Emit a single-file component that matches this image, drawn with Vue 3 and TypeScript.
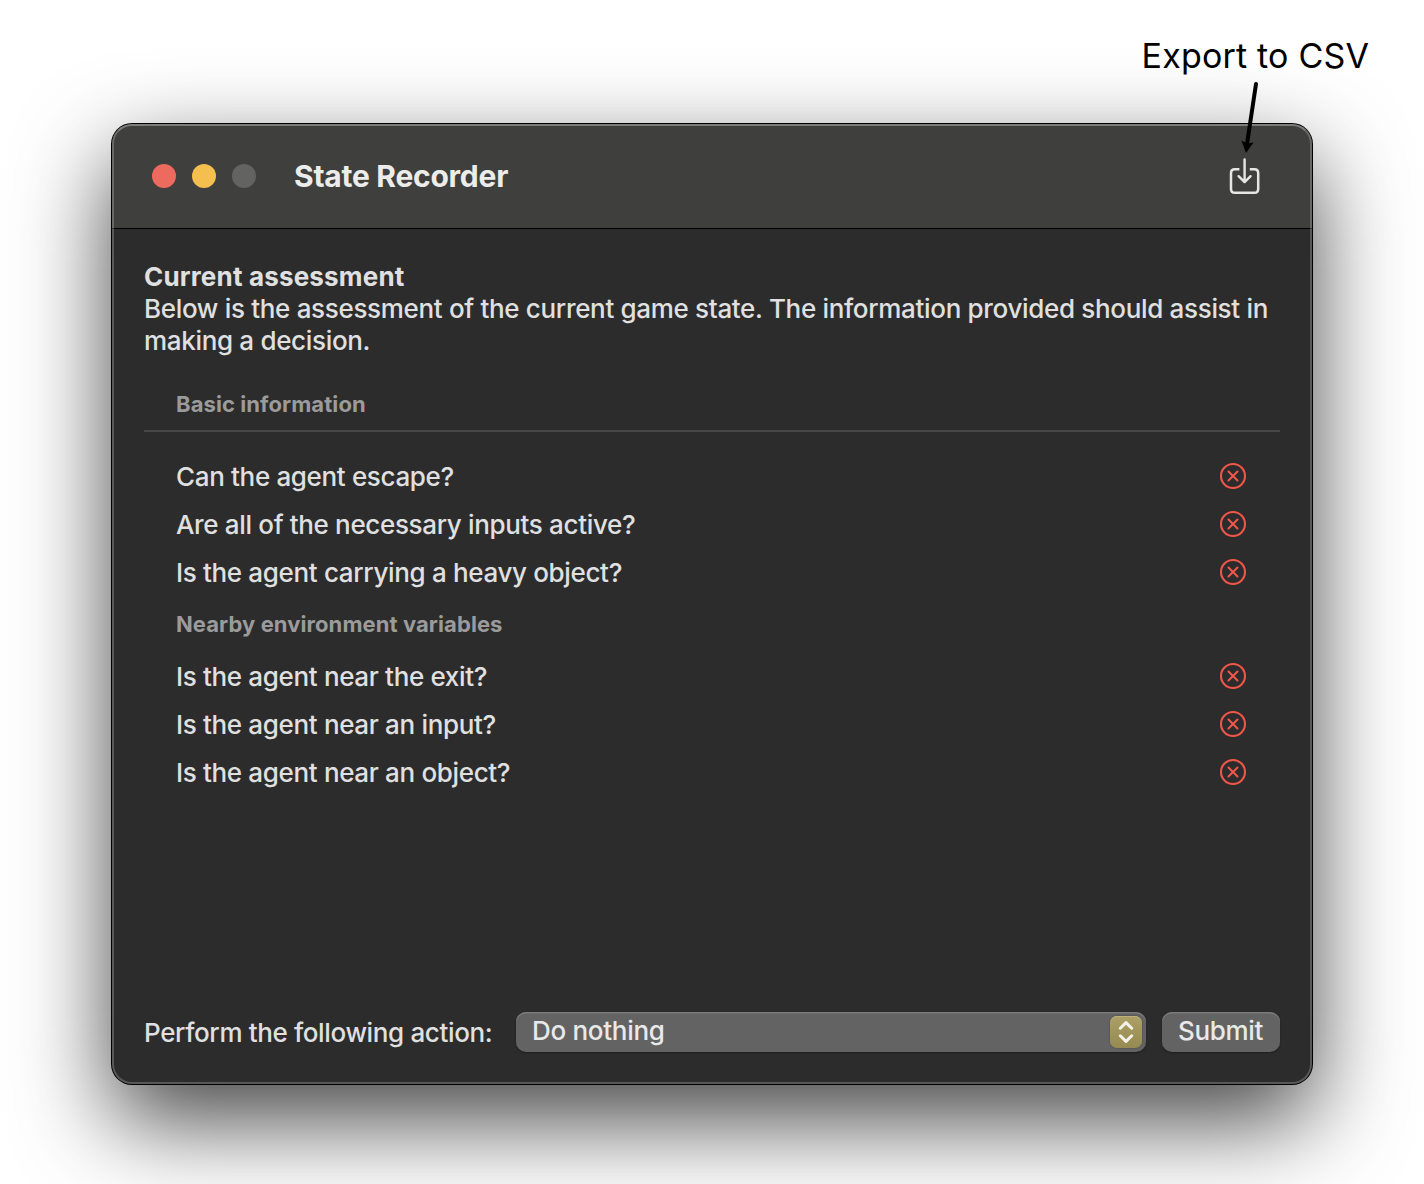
<script setup lang="ts">
interface Section {
  title: string
  divided: boolean
  questions: string[]
}

const sections: Section[] = [
  {
    title: 'Basic information',
    divided: true,
    questions: [
      'Can the agent escape?',
      'Are all of the necessary inputs active?',
      'Is the agent carrying a heavy object?',
    ],
  },
  {
    title: 'Nearby environment variables',
    divided: false,
    questions: [
      'Is the agent near the exit?',
      'Is the agent near an input?',
      'Is the agent near an object?',
    ],
  },
]
</script>

<template>
  <div class="stage">
    <section class="window">
      <header class="titlebar">
        <span class="light close"></span>
        <span class="light minimize"></span>
        <span class="light disabled"></span>
        <h1 class="title"><span>State Recorder</span></h1>
        <svg class="export" width="32" height="38" viewBox="0 0 32 38" fill="none" stroke="#e6e6e5" stroke-linecap="round" stroke-linejoin="round">
          <path d="M10.4 12.3H5.8Q2 12.3 2 16.1V32Q2 35.8 5.8 35.8H25.4Q29.2 35.8 29.2 32V16.1Q29.2 12.3 25.4 12.3H20.8" stroke-width="2.5" stroke-linecap="butt" />
          <path d="M15.6 2.4V25M9.6 19.2L15.6 25.2L21.6 19.2" stroke-width="2.4" />
        </svg>
      </header>

      <main class="body">
        <h2 class="heading"><span>Current assessment</span></h2>
        <p class="intro">
          <span>Below is the assessment of the current game state. The information provided should assist in</span><br />
          <span>making a decision.</span>
        </p>

        <div v-for="s in sections" :key="s.title">
          <h3 class="group" :class="{ divided: s.divided }"><span>{{ s.title }}</span></h3>
          <ul class="list">
            <li v-for="q in s.questions" :key="q" class="row">
              <span>{{ q }}</span>
              <svg width="28" height="28" viewBox="0 0 28 28" fill="none" stroke="#f0564a" stroke-linecap="round">
                <circle cx="14" cy="14" r="12" stroke-width="2.1" />
                <path d="M9.5 9.5L18.5 18.5M18.5 9.5L9.5 18.5" stroke-width="2.1" />
              </svg>
            </li>
          </ul>
        </div>
      </main>

      <footer class="actions">
        <span class="prompt">Perform the following action:</span>
        <div class="select">
          <span>Do nothing</span>
          <span class="stepper">
            <svg width="32" height="32" viewBox="0 0 32 32" fill="none" stroke="#f3f1e8" stroke-width="3" stroke-linecap="round" stroke-linejoin="round">
              <path d="M10.3 12.2L16 6.6L21.7 12.2M10.3 19.8L16 25.4L21.7 19.8" />
            </svg>
          </span>
        </div>
        <button class="submit" type="button">Submit</button>
      </footer>
    </section>

    <div class="callout">
      <span class="callout-text">Export to CSV</span>
      <svg class="arrow" width="40" height="80" viewBox="1230 78 40 80">
        <path d="M1256 84L1247 144" stroke="#000" stroke-width="4" stroke-linecap="round" fill="none" />
        <path d="M1246 153L1241.4 140.5L1247.2 143.6L1253.6 142.4Z" fill="#000" />
      </svg>
    </div>
  </div>
</template>

<style>
body {
  background: #fff;
}
</style>

<style scoped>
.stage {
  position: relative;
  box-sizing: border-box;
  width: 1424px;
  height: 1184px;
  padding: 124px 112px 100px;
  overflow: hidden;
  background: #fff;
  font-family: Inter, sans-serif;
}
.window {
  position: relative;
  display: flex;
  flex-direction: column;
  height: 960px;
  border-radius: 20px;
  background: #2c2c2c;
  color: #e0e0e0;
  box-shadow: 0 0 0 1px #000, 0 36px 94px rgba(0, 0, 0, 0.74);
}
.window::after {
  content: '';
  position: absolute;
  inset: 0;
  border: 2px solid rgba(255, 255, 255, 0.21);
  border-top-color: rgba(255, 255, 255, 0.32);
  border-radius: 20px;
  pointer-events: none;
}
.titlebar {
  display: flex;
  align-items: center;
  box-sizing: border-box;
  height: 105px;
  padding: 0 51px 0 40px;
  border-bottom: 1px solid #000;
  border-radius: 20px 20px 0 0;
  background: #3f3f3d;
}
.light {
  width: 24px;
  height: 24px;
  margin-right: 16px;
  border-radius: 50%;
}
.close { background: #ed6a5e; }
.minimize { background: #f5bf4f; }
.disabled { background: #636362; }
.title {
  flex: 1;
  margin: 0 0 0 22px;
  font-size: 30px;
  line-height: 36px;
  font-weight: 650;
  letter-spacing: -0.25px;
  color: #ececeb;
}
.body {
  flex: 1;
  padding: 32px 32px 0;
}
.heading,
.intro {
  margin: 0;
  font-size: 26px;
  line-height: 32px;
  white-space: nowrap;
}
.heading {
  font-weight: 700;
  letter-spacing: 0.18px;
}
.intro {
  font-weight: 450;
  letter-spacing: -0.325px;
}
.group {
  box-sizing: border-box;
  height: 56px;
  margin: 0;
  padding-left: 32px;
  font-size: 22px;
  line-height: 56px;
  font-weight: 650;
  letter-spacing: 0.08px;
  color: #9b9b9b;
}
.group.divided {
  margin: 19px 0 20px;
  border-bottom: 2px solid #464646;
}
.list {
  margin: 0;
  padding: 0 33px 0 32px;
  list-style: none;
}
.row {
  display: flex;
  align-items: center;
  justify-content: space-between;
  height: 48px;
  font-size: 26px;
  font-weight: 450;
  letter-spacing: -0.34px;
}
.actions {
  display: flex;
  align-items: center;
  height: 40px;
  padding: 0 32px;
  margin-bottom: 32px;
  font-size: 26px;
  font-weight: 450;
  letter-spacing: -0.3px;
}
.prompt {
  width: 372px;
  letter-spacing: -0.36px;
  white-space: nowrap;
}
.select,
.submit {
  box-sizing: border-box;
  height: 40px;
  border-radius: 10px;
  background: #636363;
  box-shadow: inset 0 1.5px 0 #7b7b7b, 0 1px 2px rgba(0, 0, 0, 0.35);
  color: #e9e9e9;
}
.select {
  display: flex;
  align-items: center;
  justify-content: space-between;
  width: 630px;
  padding: 0 4px 0 16px;
}
.select > span:first-child {
  padding-bottom: 3px;
}
.stepper {
  width: 32px;
  height: 32px;
  border-radius: 7px;
  background: linear-gradient(#aca067, #958a52);
  box-shadow: 0 0 2px rgba(0, 0, 0, 0.3), inset 0 1px 0 #bdb27c;
}
.stepper svg {
  display: block;
}
.submit {
  width: 118px;
  margin-left: 16px;
  padding: 0 1px 3px 0;
  border: 0;
  font: inherit;
  letter-spacing: inherit;
}
.callout {
  color: #000;
}
.callout-text {
  position: absolute;
  left: 1141.5px;
  top: 35px;
  font-size: 34px;
  line-height: 42px;
  letter-spacing: 0.2px;
  white-space: nowrap;
}
.arrow {
  position: absolute;
  left: 1230px;
  top: 78px;
}
</style>
